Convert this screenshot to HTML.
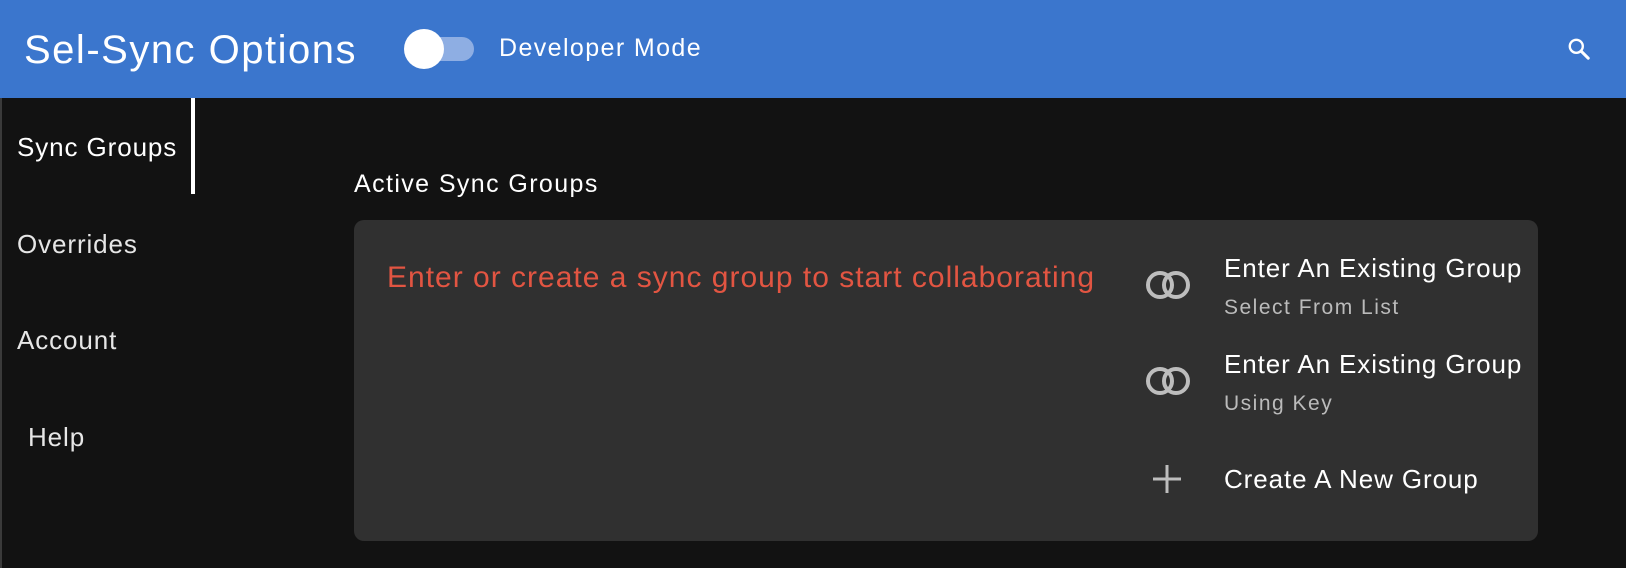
<!DOCTYPE html>
<html><head><meta charset="utf-8"><style>
*{margin:0;padding:0;box-sizing:border-box}
body{width:1626px;height:568px;background:#121212;font-family:"Liberation Sans",sans-serif;position:relative;overflow:hidden;color:#eee}
.hdr{position:absolute;left:0;top:0;width:1626px;height:98px;background:#3b76cd}
.t{position:absolute;white-space:nowrap;line-height:1}
.strip{position:absolute;left:0;top:98px;width:2px;height:470px;background:#3a3a3a}
.card{position:absolute;left:354px;top:220px;width:1184px;height:321px;background:#303030;border-radius:10px}
.nav{font-size:26px;letter-spacing:.9px;color:#e6e6e6}
.h{font-size:26px;letter-spacing:.9px;color:#fff}
.s{font-size:21px;letter-spacing:1.5px;color:#bbb}
</style></head><body>
<div class="hdr">
<div class="t" style="left:24px;top:30px;font-size:40px;letter-spacing:1.5px;color:#fff">Sel-Sync Options</div>
<div style="position:absolute;left:408px;top:37px;width:66px;height:24px;border-radius:12px;background:#8eaee3"></div>
<div style="position:absolute;left:404px;top:29px;width:40px;height:40px;border-radius:50%;background:#fff"></div>
<div class="t" style="left:499px;top:36px;font-size:25px;letter-spacing:1.4px;color:#fff">Developer Mode</div>
<svg style="position:absolute;left:1566px;top:36px" width="26" height="26" viewBox="0 0 24 24"><circle cx="9.5" cy="9.5" r="6" fill="none" stroke="#fff" stroke-width="2.2"/><path d="M14 14l6.5 6.5" stroke="#fff" stroke-width="2.8" stroke-linecap="round"/></svg>
</div>
<div class="strip"></div>
<div style="position:absolute;left:191px;top:98px;width:4px;height:96px;background:#fff"></div>
<div class="t nav" style="left:17px;top:134px;color:#fff">Sync Groups</div>
<div class="t nav" style="left:17px;top:231px">Overrides</div>
<div class="t nav" style="left:17px;top:327px">Account</div>
<div class="t nav" style="left:28px;top:424px">Help</div>
<div class="t" style="left:354px;top:172px;font-size:25px;letter-spacing:1.4px;color:#fff">Active Sync Groups</div>
<div class="card"></div>
<div class="t" style="left:387px;top:263px;font-size:30px;letter-spacing:1px;color:#e25542">Enter or create a sync group to start collaborating</div>
<svg style="position:absolute;left:1143px;top:266px" width="50" height="38" viewBox="0 0 50 38"><circle cx="17" cy="19" r="12" fill="none" stroke="#bdbdbd" stroke-width="4"/><circle cx="33" cy="19" r="12" fill="none" stroke="#bdbdbd" stroke-width="4"/></svg>
<svg style="position:absolute;left:1143px;top:362px" width="50" height="38" viewBox="0 0 50 38"><circle cx="17" cy="19" r="12" fill="none" stroke="#bdbdbd" stroke-width="4"/><circle cx="33" cy="19" r="12" fill="none" stroke="#bdbdbd" stroke-width="4"/></svg>
<svg style="position:absolute;left:1151px;top:463px" width="32" height="32" viewBox="0 0 32 32"><path d="M16 2v28M2 16h28" stroke="#bdbdbd" stroke-width="3"/></svg>
<div class="t h" style="left:1224px;top:255px">Enter An Existing Group</div>
<div class="t s" style="left:1224px;top:297px">Select From List</div>
<div class="t h" style="left:1224px;top:351px">Enter An Existing Group</div>
<div class="t s" style="left:1224px;top:393px">Using Key</div>
<div class="t h" style="left:1224px;top:466px">Create A New Group</div>
</body></html>
